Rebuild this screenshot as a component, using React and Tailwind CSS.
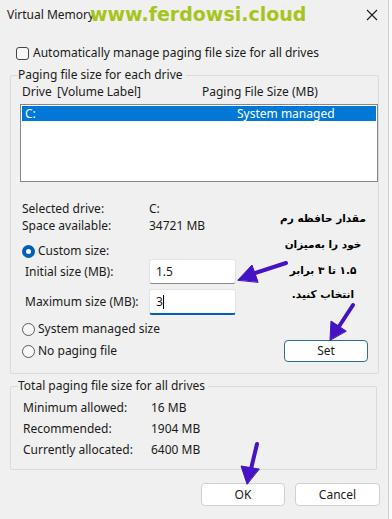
import React from "react";

function Radio({ checked }) {
  return checked ? (
    <span className="w-[13px] h-[13px] rounded-full bg-[#005fb8] flex items-center justify-center shrink-0">
      <span className="w-[5px] h-[5px] rounded-full bg-white" />
    </span>
  ) : (
    <span className="w-[13px] h-[13px] rounded-full border border-[#5a5a5a] bg-[#f7f7f7] shrink-0" />
  );
}

export default function App() {
  return (
    <div className="w-[392px] h-[519px] bg-[#f0f0f0] relative overflow-hidden flex text-[12px] text-[#1a1a1a] [font-family:'Noto_Sans',sans-serif] leading-none">
      <div className="w-[389px] h-full border-r border-[#cfcfcf] flex flex-col">
        {/* title bar */}
        <div className="h-[28px] pt-[2px] flex items-center pl-[7px] pr-[10px]">
          <span>Virtual Memory</span>
          <span className="ml-auto">
            <svg width="12" height="12" viewBox="0 0 12 12">
              <path d="M1 1 L11 11 M11 1 L1 11" stroke="#1a1a1a" strokeWidth="1.1" fill="none" />
            </svg>
          </span>
        </div>

        {/* auto manage checkbox */}
        <div className="h-[20px] mt-[15px] flex items-center pl-[16px] gap-[4px]">
          <span className="w-[13px] h-[13px] rounded-[3px] border border-[#454545] bg-[#f7f7f7]" />
          <span>Automatically manage paging file size for all drives</span>
        </div>

        {/* group 1 */}
        <fieldset className="mt-[4px] ml-[10px] w-[368px] border border-[#dadada] rounded-[2px] pl-[9px] pr-0 pb-[11px]">
          <legend className="ml-[-2px] pr-[3px] h-[16px] flex items-center">Paging file size for each drive</legend>
          <div className="h-[18px] flex items-center pl-[2px]">
            <span className="w-[35px]">Drive</span>
            <span className="w-[145px]">[Volume Label]</span>
            <span>Paging File Size (MB)</span>
          </div>
          <div className="mt-[3px] h-[78px] border border-[#828790] bg-white p-[1px]">
            <div className="h-[15px] bg-[#0078d7] text-white flex items-center pl-[3px]">
              <span className="w-[212px]">C:</span>
              <span>System managed</span>
            </div>
          </div>

          <div className="mt-[18px] flex">
            <div className="w-[240px] flex flex-col">
              <div className="h-[17px] flex items-center pl-[2px]">
                <span className="w-[127px]">Selected drive:</span>
                <span>C:</span>
              </div>
              <div className="h-[17px] flex items-center pl-[2px]">
                <span className="w-[127px]">Space available:</span>
                <span>34721 MB</span>
              </div>
              <div className="h-[16px] mt-[9px] flex items-center pl-[2px] gap-[3px]">
                <Radio checked />
                <span>Custom size:</span>
              </div>
              <div className="h-[25px] flex items-center pl-[5px]">
                <span className="w-[124px]">Initial size (MB):</span>
                <div className="w-[87px] h-[25px] bg-white border border-[#e3e3e3] border-b-[#8a8a8a] rounded-[3px] flex items-center pl-[6px]">
                  1.5
                </div>
              </div>
              <div className="h-[26px] mt-[5px] flex items-center pl-[5px]">
                <span className="w-[124px]">Maximum size (MB):</span>
                <div className="w-[87px] h-[26px] bg-white border border-[#e3e3e3] border-b-2 border-b-[#005fb8] rounded-[3px] flex items-center pl-[6px]">
                  3<span className="w-[1px] h-[14px] bg-black" />
                </div>
              </div>
              <div className="h-[16px] mt-[6px] flex items-center pl-[2px] gap-[3px]">
                <Radio />
                <span>System managed size</span>
              </div>
              <div className="h-[16px] mt-[6px] flex items-center pl-[2px] gap-[3px]">
                <Radio />
                <span>No paging file</span>
              </div>
            </div>
            <div className="w-[118px] flex flex-col items-start">
              <div
                dir="rtl"
                className="mt-[5px] ml-[9px] w-[108px] text-center whitespace-nowrap font-bold text-[10.5px] leading-[26px] text-black [font-family:'DejaVu_Sans',sans-serif]"
              >
                <div>مقدار حافظه رم</div>
                <div>خود را به‌میزان</div>
                <div>۱.۵ تا ۳ برابر</div>
                <div className="leading-[22px]">انتخاب کنید.</div>
              </div>
              <div className="mt-[35px] ml-[24px] w-[84px] h-[22px] bg-white border border-[#2a6f8f] rounded-[4px] flex items-center justify-center">
                Set
              </div>
            </div>
          </div>
        </fieldset>

        {/* group 2 */}
        <fieldset className="mt-[4px] ml-[10px] w-[367px] border border-[#dadada] rounded-[2px] pl-[12px] pb-[9px]">
          <legend className="ml-[-5px] pr-[3px] h-[16px] flex items-center">Total paging file size for all drives</legend>
          <div className="mt-[3px] h-[21px] flex items-center">
            <span className="w-[128px]">Minimum allowed:</span>
            <span>16 MB</span>
          </div>
          <div className="h-[21px] flex items-center">
            <span className="w-[128px]">Recommended:</span>
            <span>1904 MB</span>
          </div>
          <div className="h-[21px] flex items-center">
            <span className="w-[128px]">Currently allocated:</span>
            <span>6400 MB</span>
          </div>
        </fieldset>

        {/* buttons */}
        <div className="mt-[13px] flex justify-end gap-[10px] pr-[8px]">
          <div className="w-[84px] h-[23px] bg-white border border-[#d0d0d0] rounded-[4px] flex items-center justify-center">OK</div>
          <div className="w-[85px] h-[23px] bg-white border border-[#d0d0d0] rounded-[4px] flex items-center justify-center">Cancel</div>
        </div>
      </div>
      <div className="flex-1 bg-[#fafafa]" />

      {/* watermark overlay */}
      <div className="absolute left-[90px] top-[3px] text-[19px] font-bold text-[#a6c41c] [font-family:'DejaVu_Sans',sans-serif] leading-[22px]">
        www.ferdowsi.cloud
      </div>

      {/* arrows overlay */}
      <svg className="absolute inset-0 pointer-events-none" width="392" height="519" viewBox="0 0 392 519">
        <g fill="#4512c4" stroke="#4512c4" strokeLinecap="round">
          <line x1="286" y1="263" x2="252" y2="274" strokeWidth="4" />
          <polygon points="238,280 252,265 258,282" strokeWidth="1" strokeLinejoin="round" />
          <line x1="353" y1="305" x2="338" y2="328" strokeWidth="4" />
          <polygon points="330,340 331,321 346,331" strokeWidth="1" strokeLinejoin="round" />
          <line x1="257" y1="444" x2="251" y2="469" strokeWidth="4" />
          <polygon points="247,484 241,466 259,469" strokeWidth="1" strokeLinejoin="round" />
        </g>
      </svg>
    </div>
  );
}
